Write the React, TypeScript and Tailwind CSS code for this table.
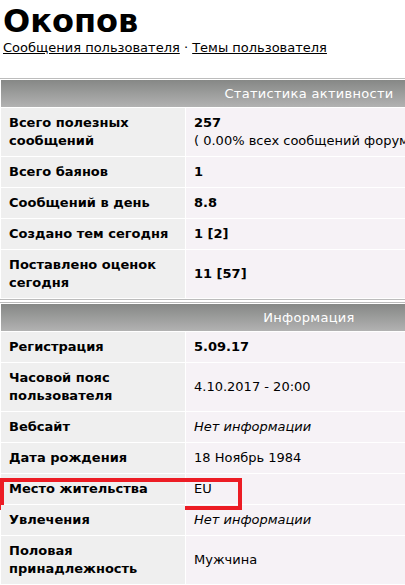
import type { ReactNode } from 'react';

type Row = { label: string; value: ReactNode; boxed?: boolean };

const activity: Row[] = [
  {
    label: 'Всего полезных сообщений',
    value: (
      <>
        <b>257</b>
        <br />
        <span>( 0.00% всех сообщений форума )</span>
      </>
    ),
  },
  { label: 'Всего баянов', value: <b>1</b> },
  { label: 'Сообщений в день', value: <b>8.8</b> },
  { label: 'Создано тем сегодня', value: <b>1 [2]</b> },
  { label: 'Поставлено оценок сегодня', value: <b>11 [57]</b> },
];

const info: Row[] = [
  { label: 'Регистрация', value: <b>5.09.17</b> },
  { label: 'Часовой пояс пользователя', value: '4.10.2017 - 20:00' },
  { label: 'Вебсайт', value: <i>Нет информации</i> },
  { label: 'Дата рождения', value: '18 Ноябрь 1984' },
  { label: 'Место жительства', value: 'EU', boxed: true },
  { label: 'Увлечения', value: <i>Нет информации</i> },
  { label: 'Половая принадлежность', value: 'Мужчина' },
];

// the profile table is wider than the window; headers are centred on the full table
function Section({ title, rows, className = '' }: { title: string; rows: Row[]; className?: string }) {
  return (
    <div className={`w-[617px] border-y border-[#bcbcbc] bg-white pl-px py-px ${className}`}>
      <div className="grid grid-cols-[184px_1fr] gap-px">
        <div className="col-span-2 h-[27px] bg-gradient-to-b from-[#868886] to-[#b2b2b2] flex items-center justify-center text-white tracking-[0.3px]">
          {title}
        </div>
        {rows.map((r) => (
          <div key={r.label} className="contents">
            <div className="relative bg-[#efefef] pl-[8px] pr-[2px] py-[6px] font-bold flex items-center">
              <span>{r.label}</span>
              {r.boxed && (
                <span className="absolute left-[-1px] top-[4px] w-[242px] h-[32px] border-4 border-[#ec1c24] pointer-events-none"></span>
              )}
            </div>
            <div className="bg-[#f6f2f6] pl-[8px] py-[6px] min-w-0 whitespace-nowrap flex items-center">
              <div>{r.value}</div>
            </div>
          </div>
        ))}
      </div>
    </div>
  );
}

export default function App() {
  return (
    <div className="w-[405px] h-[585px] overflow-hidden bg-white text-black font-['DejaVu_Sans',Verdana,sans-serif] text-[13px] leading-[18px]">
      <h1 className="mt-[4px] pl-[3px] text-[32px] leading-[35px] font-bold">Окопов</h1>
      <div className="pl-[3px]">
        <a href="#" className="underline">Сообщения пользователя</a>
        <span> · </span>
        <a href="#" className="underline">Темы пользователя</a>
      </div>
      <div className="mt-[21px]">
        <Section title="Статистика активности" rows={activity} />
        <Section title="Информация" rows={info} className="mt-[2px]" />
      </div>
    </div>
  );
}
